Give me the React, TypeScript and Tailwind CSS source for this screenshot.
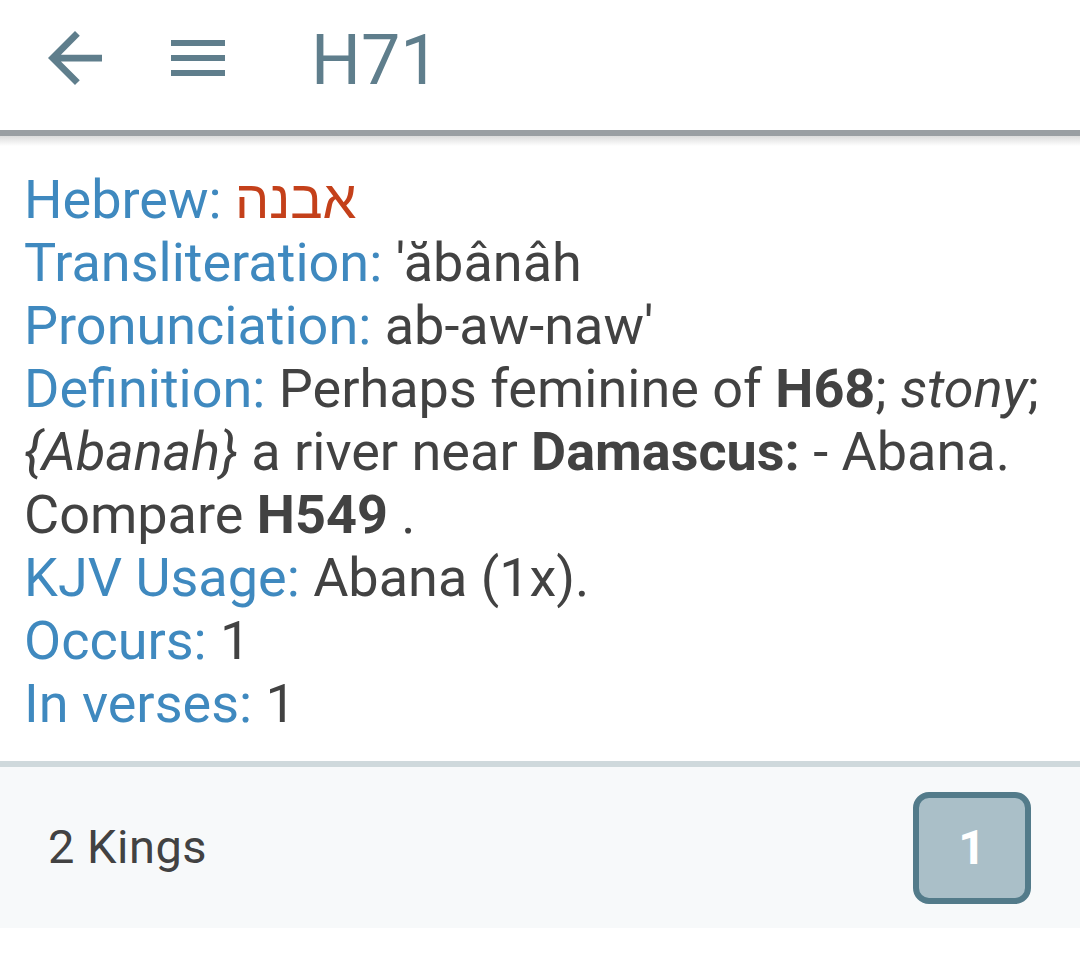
import React from "react";

function Label({ children }: { children: React.ReactNode }) {
  return <span className="text-[#3f89bf]">{children}</span>;
}

export default function App() {
  return (
    <div className="w-[1080px] h-[962px] bg-white font-['Roboto','Liberation_Sans',sans-serif] overflow-hidden">
      {/* Header */}
      <div className="h-[130px] flex items-center pl-[48px] pb-[14px] bg-white">
        <svg width="54" height="54" viewBox="4 4 16 16" className="shrink-0">
          <path
            d="M20 11H7.83l5.59-5.59L12 4l-8 8 8 8 1.41-1.41L7.83 13H20v-2z"
            fill="#5f7e8c"
          />
        </svg>
        <svg width="54" height="36" viewBox="3 6 18 12" className="shrink-0 ml-[69px]">
          <path d="M3 18h18v-2H3v2zm0-5h18v-2H3v2zm0-7v2h18V6H3z" fill="#5f7e8c" />
        </svg>
        <div className="ml-[86px] text-[70px] leading-none text-[#5f7e8c] mt-[4px]">H71</div>
      </div>
      <div className="h-[6px] bg-[#9a9fa3]" />
      <div className="h-[10px] bg-gradient-to-b from-[#dcdcdc] to-white" />

      {/* Content */}
      <div className="px-[24px] pt-[22px] pb-[26px] text-[54px] leading-[63px] text-[#424242]">
        <div>
          <Label>Hebrew:</Label>{" "}
          <span className="text-[#c4401a] font-['Liberation_Sans','DejaVu_Sans',sans-serif]" dir="rtl">
            אבנה
          </span>
        </div>
        <div>
          <Label>Transliteration:</Label> 'ăbânâh
        </div>
        <div>
          <Label>Pronunciation:</Label> ab-aw-naw'
        </div>
        <div>
          <Label>Definition:</Label> Perhaps feminine of <b className="font-bold">H68</b>;{" "}
          <i>stony</i>; <i>{"{Abanah}"}</i> a river near <b className="font-bold">Damascus:</b> - Abana.
          Compare <b className="font-bold">H549</b> .
        </div>
        <div>
          <Label>KJV Usage:</Label> Abana (1x).
        </div>
        <div>
          <Label>Occurs:</Label> 1
        </div>
        <div>
          <Label>In verses:</Label> 1
        </div>
      </div>

      <div className="h-[6px] bg-[#cfd9dc]" />
      <div className="h-[161px] bg-[#f7f9fa] flex items-center justify-between pl-[48px] pr-[49px]">
        <div className="text-[47px] text-[#424242] tracking-[0.5px]">2 Kings</div>
        <div className="w-[118px] h-[112px] border-[6px] border-[#537b8a] bg-[#aabfc8] rounded-[16px] flex items-center justify-center text-white font-bold text-[48px]">
          1
        </div>
      </div>
    </div>
  );
}
